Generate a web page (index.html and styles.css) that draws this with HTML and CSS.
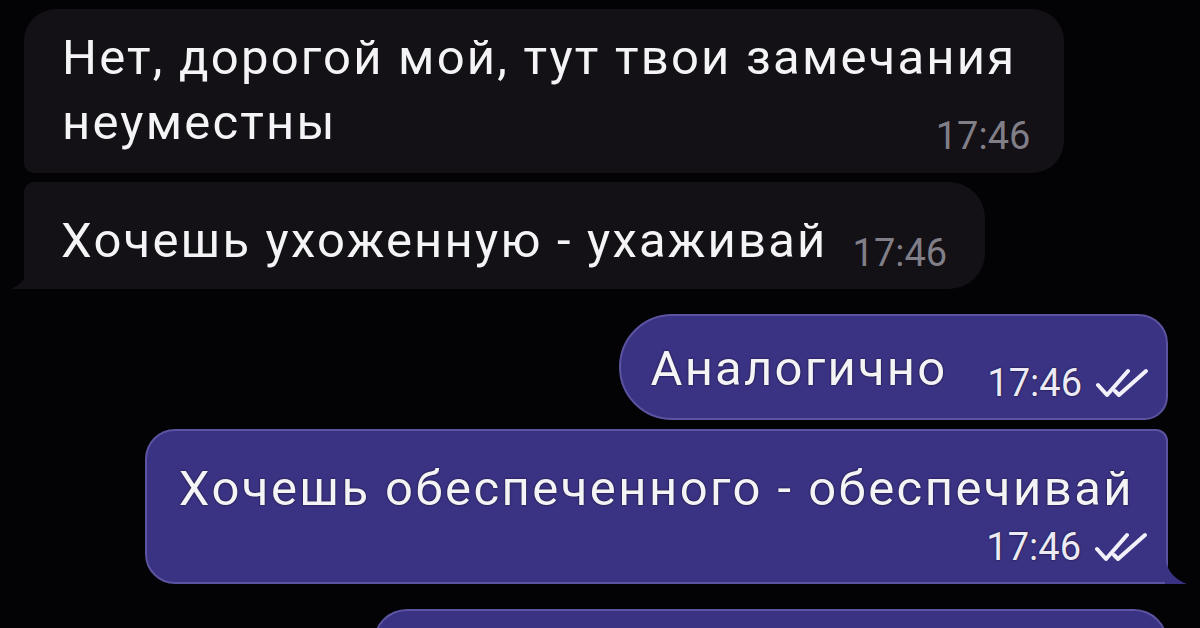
FILE: index.html
```html
<!DOCTYPE html>
<html lang="ru">

<head>
  <meta charset="UTF-8">
  <meta name="viewport" content="width=device-width, initial-scale=1.0">
  <title>Чат</title>
  <link rel="stylesheet" href="styles.css">
</head>

<body>
  <div class="chat">

    <div class="row">
      <div class="bubble inBubble first">
        <div class="msgText">Нет, дорогой мой, тут твои замечания<br>неуместны</div>
        <div class="meta">17:46</div>
      </div>
    </div>

    <div class="row">
      <div class="bubble inBubble last">
        <div class="msgText">Хочешь ухоженную - ухаживай</div>
        <div class="meta">17:46</div>
        <svg class="tail tailLeft" viewBox="0 0 20 32"><path d="M20 0 C20 14 15 25 0 32 L20 32 Z" /></svg>
      </div>
    </div>

    <div class="row outRow groupStart">
      <div class="bubble outBubble first">
        <div class="msgText">Аналогично</div>
        <div class="meta">17:46
          <svg class="checks" viewBox="0 0 54 30"><path d="M2 17 L11 27 L32 3" /><path d="M19 23 L23 27 L50 3" /></svg>
        </div>
      </div>
    </div>

    <div class="row outRow">
      <div class="bubble outBubble last stacked">
        <div class="msgText">Хочешь обеспеченного - обеспечивай</div>
        <div class="meta">17:46
          <svg class="checks" viewBox="0 0 54 30"><path d="M2 17 L11 27 L32 3" /><path d="M19 23 L23 27 L50 3" /></svg>
        </div>
        <svg class="tail tailRight" viewBox="0 0 22 32"><path d="M0 0 C0 14 5 25 22 32 L0 32 Z" /></svg>
      </div>
    </div>

    <div class="row outRow groupStart">
      <div class="bubble outBubble next">
        <div class="msgText">&nbsp;</div>
      </div>
    </div>

  </div>
</body>

</html>
```

FILE: styles.css
```css
:root {
  --inColor: #131016;
  --outColor: #3a3283;
  --outEdge: #5b54a0;
  --timeGrey: #807e87;
}

body {
  margin: 0;
  background: #030205;
  font-family: Roboto, "Noto Sans", sans-serif;
  color: #f4f4f6;
  overflow: hidden;
}

.chat {
  display: flex;
  flex-direction: column;
  gap: 9px;
  padding: 9px 32px 0 24px;
}

.row {
  display: flex;
}

.outRow {
  justify-content: flex-end;
}

.groupStart {
  margin-top: 16px;
}

.bubble {
  position: relative;
  display: flex;
  align-items: flex-end;
  font-size: 49px;
  line-height: 65px;
}

.msgText {
  white-space: nowrap;
  letter-spacing: 2.2px;
}

.meta {
  display: flex;
  align-items: center;
  font-size: 38px;
  line-height: 38px;
  white-space: nowrap;
}

/* incoming */

.inBubble {
  background: var(--inColor);
}

.inBubble .meta {
  color: var(--timeGrey);
}

.inBubble.first {
  flex-direction: column;
  padding: 16px 34px 18px 38px;
  border-radius: 32px 32px 32px 10px;
}

.inBubble.first .msgText {
  margin-right: 14px;
}

.inBubble.first .meta {
  margin-top: -38px;
}

.inBubble.last {
  padding: 26px 38px 16px 37px;
  gap: 25px;
  border-radius: 10px 36px 36px 0;
}

.inBubble.last .meta {
  margin-bottom: 1px;
}

/* outgoing */

.outBubble {
  background: var(--outColor);
  border: 2px solid var(--outEdge);
  text-shadow: 0 0 2px rgba(0, 0, 0, 0.8);
}

.outBubble .meta {
  color: #eceaf6;
  gap: 14px;
}

.outBubble.first {
  padding: 20px 16px 17px 30px;
  gap: 40px;
  border-radius: 54px 30px 24px 54px;
}

.outBubble.first .meta {
  margin-bottom: -1px;
}

.outBubble.stacked {
  flex-direction: column;
  padding: 25px 17px 16px 32px;
  border-radius: 30px 12px 0 30px;
}

.outBubble.stacked .msgText {
  margin-right: 15px;
  letter-spacing: 2.45px;
}

.outBubble.stacked .meta {
  margin-top: 7px;
}

.outBubble.next {
  width: 791px;
  height: 80px;
  border-radius: 34px 34px 0 0;
  border-bottom: none;
}

.checks {
  width: 54px;
  height: 30px;
  fill: none;
  stroke: #f2f1fa;
  stroke-width: 4;
  stroke-linecap: round;
  stroke-linejoin: round;
}

.tail {
  position: absolute;
  bottom: 0;
  height: 32px;
}

.tailLeft {
  left: -13px;
  width: 20px;
  fill: var(--inColor);
}

.tailRight {
  right: -21px;
  bottom: -2px;
  width: 22px;
  fill: var(--outColor);
}
```
